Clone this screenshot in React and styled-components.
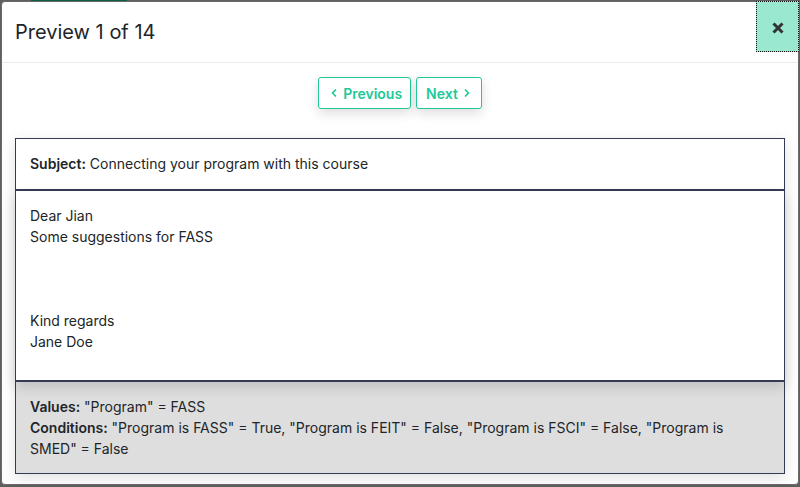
import React from "react";
import styled, { createGlobalStyle } from "styled-components";
import { ChevronLeft, ChevronRight } from "lucide-react";

const GlobalStyle = createGlobalStyle`
  html, body {
    margin: 0;
    padding: 0;
    background: #5f5f5f;
    font-family: Inter, "Noto Sans", "Liberation Sans", sans-serif;
    color: #212529;
  }
  * {
    box-sizing: border-box;
  }
`;

const conditions = [
  ["Program is FASS", "True"],
  ["Program is FEIT", "False"],
  ["Program is FSCI", "False"],
  ["Program is SMED", "False"],
];

export default function App() {
  return (
    <Page>
      <GlobalStyle />
      <Behind>
        <BehindTab />
      </Behind>
      <Modal>
        <Header>
          <Title>Preview 1 of 14</Title>
          <CloseButton aria-label="Close">
            <svg width="12" height="12" viewBox="0 0 12 12">
              <path
                d="M1.5 1.5 L10.5 10.5 M10.5 1.5 L1.5 10.5"
                stroke="#333"
                strokeWidth="3"
                strokeLinecap="butt"
              />
            </svg>
          </CloseButton>
        </Header>
        <Body>
          <Pager>
            <PagerButton>
              <ChevronLeft size={12} strokeWidth={3.5} />
              Previous
            </PagerButton>
            <PagerButton>
              Next
              <ChevronRight size={12} strokeWidth={3.5} />
            </PagerButton>
          </Pager>
          <Email>
            <Subject>
              <b>Subject:</b> Connecting your program with this course
            </Subject>
            <Message>
              <Line>Dear Jian</Line>
              <Line>Some suggestions for FASS</Line>
              <Line />
              <Line />
              <Line />
              <Line>Kind regards</Line>
              <Line>Jane Doe</Line>
            </Message>
            <Details>
              <b>Values:</b> "Program" = FASS
              <br />
              <b>Conditions:</b>{" "}
              {conditions.map(([name, value]) => `"${name}" = ${value}`).join(", ")}
            </Details>
          </Email>
        </Body>
      </Modal>
    </Page>
  );
}

const Page = styled.div`
  width: 800px;
  height: 487px;
  overflow: hidden;
  padding: 0 1px;
`;

const Behind = styled.div`
  height: 1px;
  display: flex;
`;

const BehindTab = styled.div`
  margin-left: 30px;
  width: 96px;
  height: 1px;
  background: #0b5e44;
`;

const Modal = styled.div`
  position: relative;
  background: #fff;
  border: 1px solid #6a6a6a;
  border-radius: 4px;
  height: 484px;
`;

const Header = styled.div`
  height: 61px;
  display: flex;
  align-items: center;
  padding: 0 13px;
  border-bottom: 1px solid #e9ecef;
`;

const Title = styled.h5`
  margin: 0;
  font-size: 20px;
  font-weight: 400;
  line-height: 30px;
  color: #212529;
`;

const CloseButton = styled.button`
  position: absolute;
  top: -1px;
  right: -1px;
  width: 43px;
  height: 51px;
  padding: 3px 0 0;
  background: #99e8cf;
  border: 1px dotted #111;
  display: flex;
  align-items: center;
  justify-content: center;
  cursor: pointer;
`;

const Body = styled.div`
  padding: 14px 13px 0;
`;

const Pager = styled.div`
  display: flex;
  justify-content: center;
  gap: 5px;
  margin-bottom: 29px;
`;

const PagerButton = styled.button`
  display: flex;
  align-items: center;
  gap: 3px;
  height: 32px;
  padding: 0 8px 0 9px;
  background: #fff;
  border: 1px solid #20c997;
  border-radius: 3px;
  color: #20c997;
  font-family: inherit;
  font-size: 14px;
  font-weight: 600;
  box-shadow: 0 4px 12px rgba(0, 0, 0, 0.14);
  cursor: pointer;
`;

const Email = styled.div`
  width: 770px;
  font-size: 14px;
  line-height: 21px;
  box-shadow: 0 4px 14px rgba(0, 0, 0, 0.12);

  b {
    font-weight: 600;
  }
`;

const Subject = styled.div`
  padding: 14px 14px 15px;
  border: 1px solid #363b55;
  border-bottom-width: 2px;
`;

const Message = styled.div`
  position: relative;
  z-index: 1;
  height: 191px;
  padding: 14px 14px;
  background: #fff;
  border: 1px solid #363b55;
  border-top: none;
  border-bottom-width: 2px;
  box-shadow: 0 5px 12px rgba(0, 0, 0, 0.14);
`;

const Line = styled.div`
  min-height: 21px;
`;

const Details = styled.div`
  padding: 14px 14px 14px;
  background: #dedede;
  border: 1px solid #363b55;
  border-top: none;
`;
